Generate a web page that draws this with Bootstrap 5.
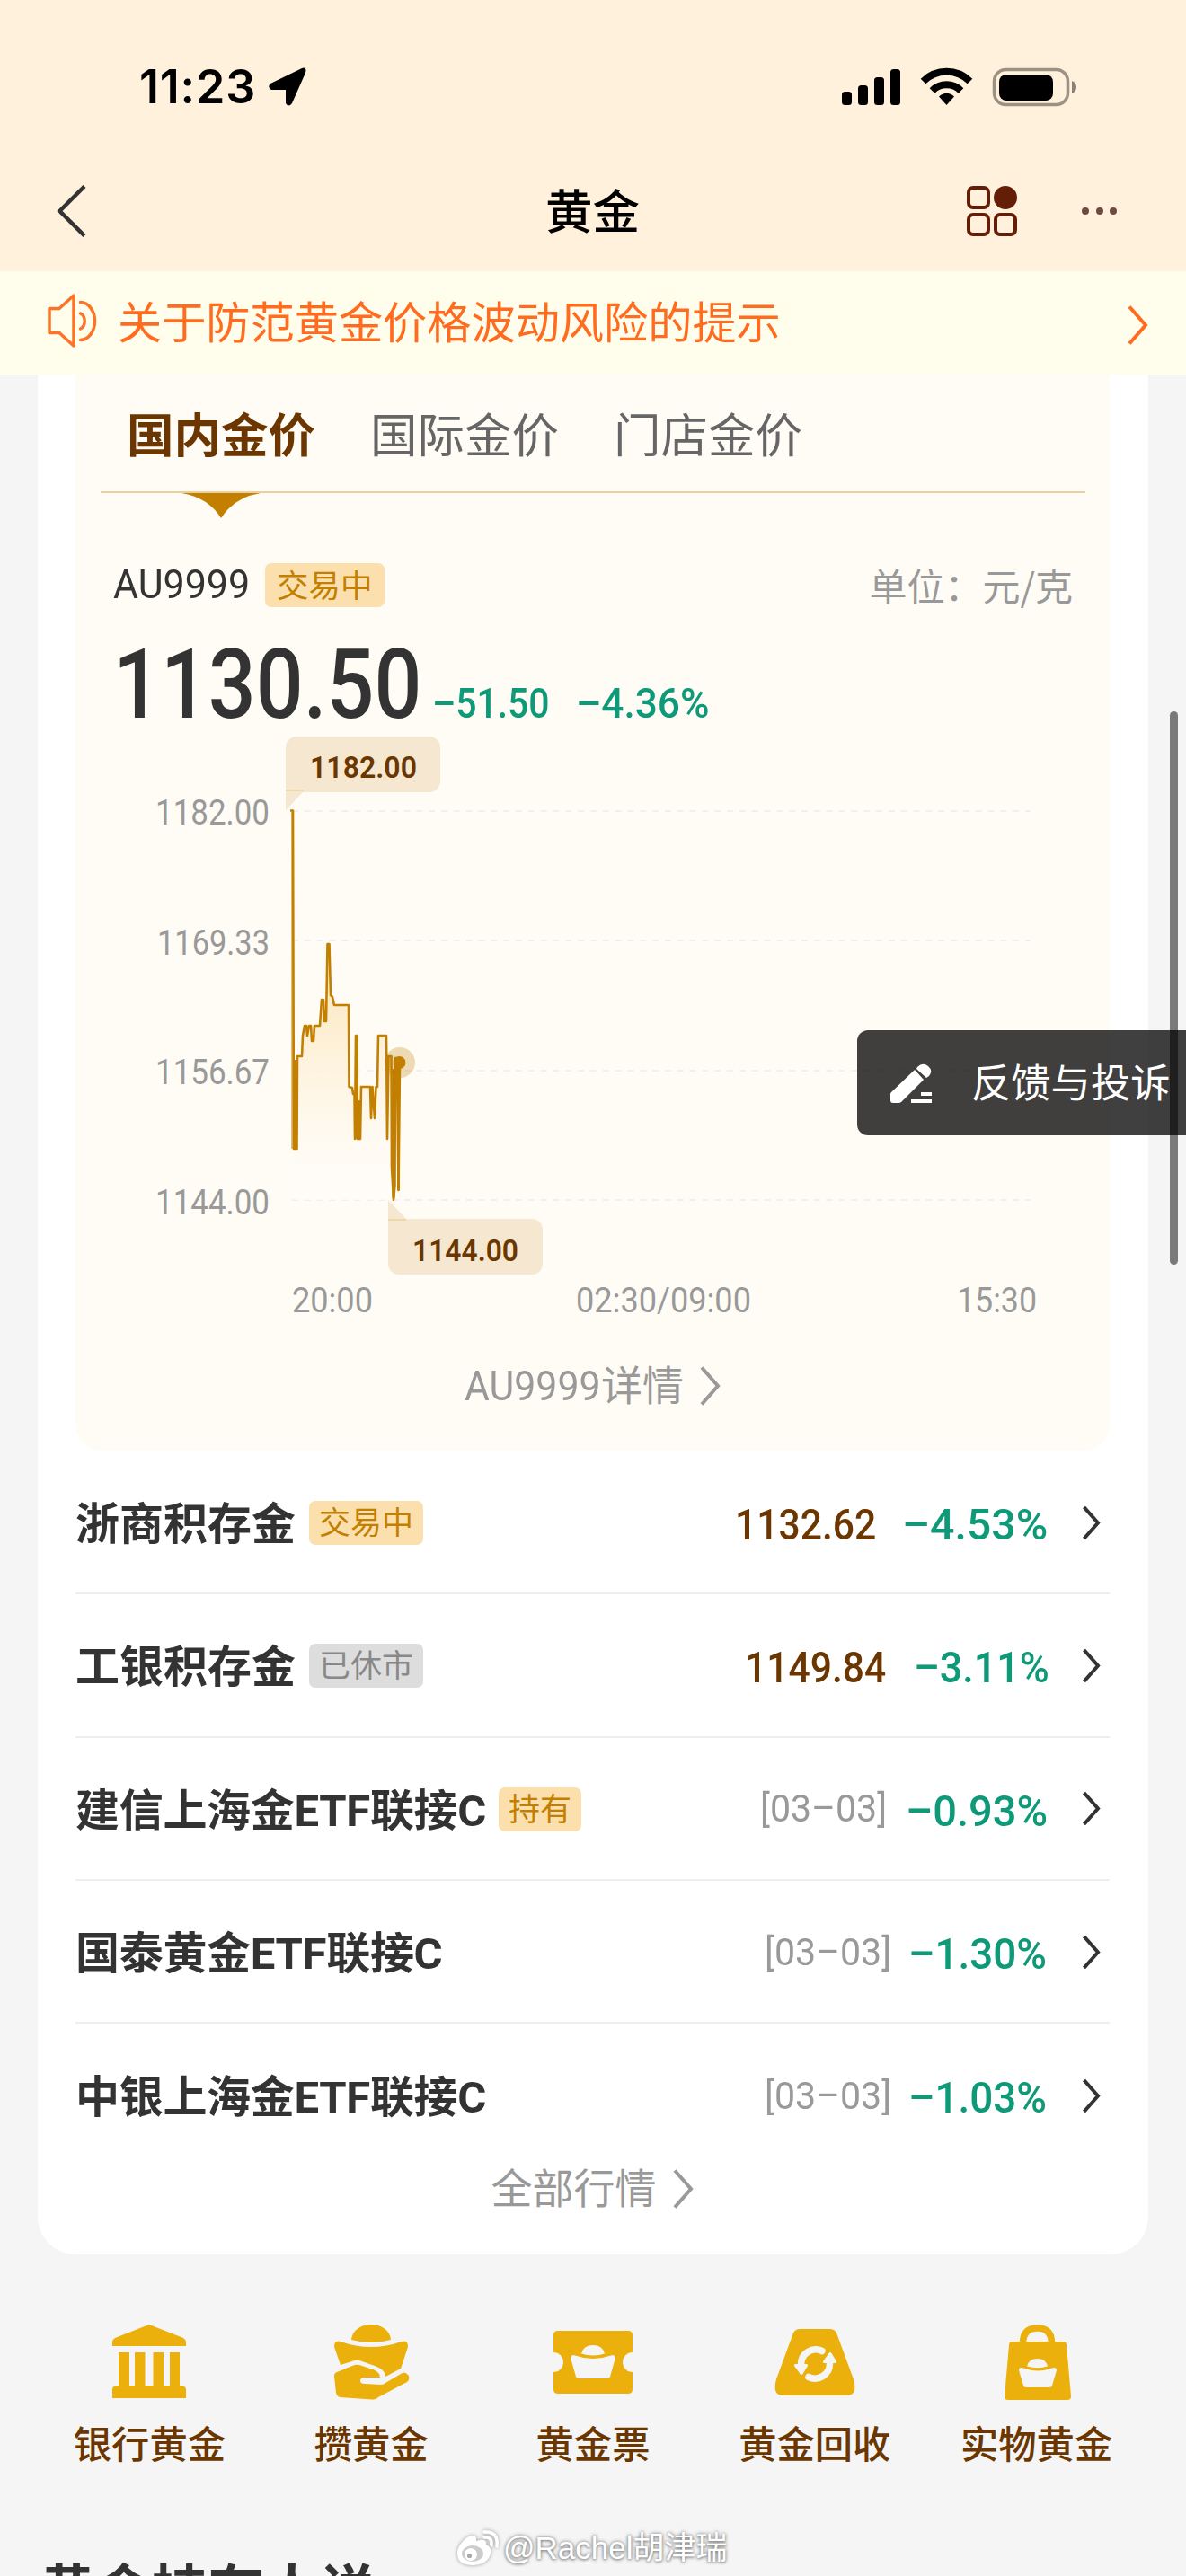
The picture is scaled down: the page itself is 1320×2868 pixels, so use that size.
<!DOCTYPE html>
<html lang="zh-CN">
<head>
<meta charset="utf-8">
<title>黄金</title>
<link href="https://cdn.jsdelivr.net/npm/bootstrap@5.3.0/dist/css/bootstrap.min.css" rel="stylesheet">
<style>
body{background:#f5f5f5;width:1320px;height:2868px;overflow:hidden;font-family:Roboto,"Noto Sans CJK SC",sans-serif;color:#333;position:relative}
svg{display:block;flex:none}
.cjk{font-family:"Noto Sans CJK SC",sans-serif}
.din{display:inline-block;transform-origin:0 50%;transform:scaleX(.87);white-space:nowrap;flex:none}
.topbar{background:#fff1dc;height:302px}
.status{height:170px;padding:23px 119px 0 155px}
.clock{font:600 52px/60px Inter,sans-serif;letter-spacing:.8px;color:#000;width:144px;white-space:nowrap}
.titlebar{height:130px;padding:0 77px 0 60px}
.titlebar h1{font-size:52.500px;font-weight:500;line-height:60px;color:#000;width:106px;margin-left:509px;padding-top:3px}
.notice{height:115px;background:#fffdeb;color:#ff6b1f;padding:0 41px 0 50px}
.notice p{font-size:49.200px;line-height:60px;white-space:nowrap;font-weight:400;margin:0 0 0 21px}
.panel{margin:0 42px;background:#fff;height:2093px;border-radius:0 0 42px 42px;padding:0 43px 0 42px}
.quote{background:#fffcf5;height:1198px;border-radius:0 0 30px 30px;padding:0 27px 0 28px}
.tabs{height:132px;border-bottom:2px solid #ebcf9c;gap:61px;padding:39px 30px 0 29px;font-size:52.500px;line-height:60px;color:#666}
.tabs .on{color:#6b3600;font-weight:700}
.tabmark{margin-left:90px}
.symrow{height:50px;margin-top:49px;padding:0 14px}
.sym{font-size:45px;line-height:50px;width:161px;transform:scaleX(.955)}
.tag{background:#fbe0ae;color:#c27f00;border-radius:7px;height:49px;line-height:52px;font-size:35px;padding:0 11px;white-space:nowrap;flex:none}
.symrow .tag{padding:0 13px;font-size:35.500px}
.tag.off{background:#ddd;color:#888}
.unit{font-size:42px;line-height:50px;color:#999;white-space:nowrap}
.price{height:125px;padding:24px 0 0 14px}
.big{font-size:107px;line-height:126px;font-weight:500;width:355px;transform:scaleX(.87)}
.chg{font-size:47px;line-height:56px;font-weight:500;color:#0e9a78}
.plot{margin:-1px 0 0 -28px}
.more{font-size:46px;line-height:60px;color:#999}
.fund{height:159.3px;border-bottom:2px solid #eee;padding:2px 10px 0 0}
.fund:first-of-type{margin-top:1px}
.fund:last-of-type{border:0}
.fname{font-size:49px;font-weight:700;line-height:60px;white-space:nowrap;margin:5px 15px 0 0}
.fname.etf{letter-spacing:-.3px;margin-right:14px}
.val,.pct{font-size:49px;line-height:60px;font-weight:500;color:#6b3600;margin-top:5px}
.pct{color:#0e9a78}
.day{font-size:43px;line-height:60px;color:#999;margin-top:-2px;transform:scaleX(.955)}
.services{margin:70px 43px 0;height:181px}
.services .col{font-size:42.300px;font-weight:500;line-height:56px;color:#6b3600;padding:0}
.nexttitle{font-size:62.500px;font-weight:700;line-height:80px;margin:85px 0 0 44px;white-space:nowrap}
.feedback{position:absolute;left:954px;top:1147px;width:366px;height:117px;border-radius:12px 0 0 12px;background:rgba(0,0,0,.75);color:#fff;font-size:44.300px;padding-left:36px;white-space:nowrap}
.thumb{position:absolute;left:1302px;top:792px;width:9px;height:616px;border-radius:5px;background:#7a7a7a}
.mark-user{position:absolute;left:506px;top:2814px;color:#fff;font:400 35px/46px "Liberation Sans","Noto Sans CJK SC",sans-serif;text-shadow:0 0 4px #777,0 1px 3px #999;white-space:nowrap}
</style>
</head>
<body>
<header class="topbar">
  <div class="status d-flex align-items-center">
    <span class="clock">11:23</span>
    <svg width="42" height="43" viewBox="0 0 42 43"><path d="M37 1Q43-1 41 6L26 40q-4 5-7 0V25H3q-5-3-1-7z"/></svg>
    <svg class="ms-auto" width="266" height="44" viewBox="0 0 266 44">
      <rect x="2" y="27" width="11" height="15" rx="3.5"/><rect x="20" y="20" width="11" height="22" rx="3.5"/><rect x="38" y="11" width="11" height="31" rx="3.5"/><rect x="56" y="2" width="11" height="40" rx="3.5"/>
      <g fill="none" stroke="#000" stroke-width="8"><path d="M92.500 15.500a37 37 0 0 1 52 0"/><path d="M102.500 26a22.500 22.500 0 0 1 32 0"/></g>
      <path d="M118.500 42l-8.500-9.500q8.500-7.500 17 0z"/>
      <rect x="171.500" y="2.500" width="82" height="39" rx="13" fill="none" stroke="#9c9284" stroke-width="3.500"/>
      <rect x="177" y="8" width="60" height="29" rx="8"/><path d="M258 15q5 2 5 7t-5 7z" fill="#8a8275"/>
    </svg>
  </div>
  <div class="titlebar d-flex align-items-center">
    <svg width="38" height="58" viewBox="0 0 38 58"><path d="M34 1.500L6.500 29 34 56.500" fill="none" stroke="#333" stroke-width="4.500"/></svg>
    <h1 class="mb-0">黄金</h1>
    <svg class="ms-auto" width="170" height="58" viewBox="0 0 170 58">
      <g fill="none" stroke="#641e07" stroke-width="4"><rect x="5" y="3" width="22" height="22" rx="5"/><rect x="5" y="33" width="22" height="22" rx="5"/><rect x="35" y="33" width="22" height="22" rx="5"/></g>
      <circle cx="46" cy="14" r="13" fill="#641e07"/><g fill="#6f4a40"><circle cx="135" cy="29" r="4"/><circle cx="151" cy="29" r="4"/><circle cx="166" cy="29" r="4"/></g>
    </svg>
  </div>
</header>
<div class="notice d-flex align-items-center">
  <svg style="margin-top:-6px" width="60" height="62" viewBox="0 0 60 62" fill="none" stroke="#fb7427" stroke-width="3.500" stroke-linejoin="round" stroke-linecap="round"><path d="M5 17.500h11L32 3v56L16 44.500H5zM39.500 10.500a16 21 0 0 1 0 42M39.500 23a7 9 0 0 1 0 17"/></svg>
  <p>关于防范黄金价格波动风险的提示</p>
  <svg class="ms-auto" style="margin-top:4px" width="24" height="44" viewBox="0 0 24 44"><path d="M2 1.500l18 20.500L2 42.500" fill="none" stroke="#ff6b1f" stroke-width="4"/></svg>
</div>
<main class="panel">
  <section class="quote">
    <nav class="tabs d-flex"><span class="on">国内金价</span><span>国际金价</span><span>门店金价</span></nav>
    <svg class="tabmark" width="88" height="28" viewBox="0 0 88 28"><path d="M0 0h88Q58 5 44 28 30 5 0 0z" fill="#c27f00"/></svg>
    <div class="symrow d-flex align-items-center"><span class="din sym">AU9999</span><span class="tag ms-2">交易中</span><span class="unit cjk ms-auto">单位：元/克</span></div>
    <div class="price d-flex align-items-baseline"><span class="din big">1130.50</span><span class="din chg" style="width:160px">–51.50</span><span class="din chg" style="transform:scaleX(.94)">–4.36%</span></div>
    <svg class="plot" width="1151" height="700" viewBox="84 800 1151 700" font-family="Roboto" font-size="38" fill="#999">
      <defs><linearGradient id="fade" x1="0" y1="1050" x2="0" y2="1310" gradientUnits="userSpaceOnUse"><stop offset="0" stop-color="#fbe3b4"/><stop offset="1" stop-color="#fffdfa" stop-opacity=".6"/></linearGradient></defs>
      <g stroke="#f0f0f0" stroke-width="2" stroke-dasharray="7 6.830"><path d="M325 903h822M325 1047h822M325 1192h822M325 1336h822"/></g>
      <path fill="url(#fade)" d="M327 1279L331 1176H336L339 1142H356L358 1113 363 1137 365 1051 368 1108 372 1119H388L389 1210 393 1218 395 1268H401L402 1210H419L421 1153H430L432 1176H435L438 1336H327z"/>
      <path fill="none" stroke="#c27f00" stroke-width="2.600" stroke-linejoin="round" d="M323 902.500L326 902.500 327 1279 330.500 1279 331 1176 336 1176 337 1153 339 1142 341 1142 342 1153 344 1142 346 1142 347 1159 349 1159 350 1142 356 1142 358 1113 360 1113 361 1137 363 1137 364.500 1051 366.500 1051 368 1108 370 1110 372 1119 388 1119 388.500 1210 392 1211 393 1218 394.500 1218 395 1268 396 1153 397.500 1153 398 1268 401 1268 402 1210 412 1210 413 1245 414.500 1210 417 1245 418.500 1210 420 1210 421 1153 430 1153 431 1268 432.500 1176 435.500 1176 436 1300 438 1336 439.500 1320 440 1178 442 1178 443.500 1325 445 1183"/>
      <path fill="none" stroke="#c27f00" stroke-width="3" d="M329 1279V1180M396.500 1268V1220M399.500 1268V1225M438 1334V1190M443.500 1325V1185"/>
      <path stroke="#c27f00" opacity=".5" stroke-width="3" d="M325.500 904V1279"/>
      <circle cx="445" cy="1183" r="17" fill="#c27f00" opacity=".27"/><circle cx="444.500" cy="1183" r="7" fill="#c27f00"/>
      <g fill="#f5e7d0"><rect x="318" y="820" width="172" height="62" rx="12"/><path d="M318 870v32l21-22z"/><rect x="432" y="1357" width="172" height="62" rx="12"/><path d="M432 1370v-34l21 22z"/></g>
      <path d="M318 880h20M432 1358h20" stroke="#efd8a8" stroke-width="2"/>
      <g fill="#6b3600" font-size="34" font-weight="600"><text x="345" y="866" textLength="119" lengthAdjust="spacingAndGlyphs">1182.00</text><text x="459" y="1404" textLength="118" lengthAdjust="spacingAndGlyphs">1144.00</text></g>
      <g><text x="173" y="918" textLength="127" lengthAdjust="spacingAndGlyphs">1182.00</text><text x="175" y="1063" textLength="125" lengthAdjust="spacingAndGlyphs">1169.33</text><text x="173" y="1207" textLength="127" lengthAdjust="spacingAndGlyphs">1156.67</text><text x="173" y="1352" textLength="127" lengthAdjust="spacingAndGlyphs">1144.00</text>
      <text x="325" y="1461" textLength="90" lengthAdjust="spacingAndGlyphs">20:00</text><text x="641" y="1461" textLength="195" lengthAdjust="spacingAndGlyphs">02:30/09:00</text><text x="1065" y="1461" textLength="89" lengthAdjust="spacingAndGlyphs">15:30</text></g>
    </svg>
    <div class="more d-flex justify-content-center align-items-center" style="margin-top:13px"><span><span class="din" style="transform:scaleX(.93);margin-right:-11px">AU9999</span>详情</span><svg class="ms-3" width="26" height="44" viewBox="0 0 26 44"><path d="M4 1.500l18 20.500L4 42.500" fill="none" stroke="#999" stroke-width="4"/></svg></div>
  </section>
  <section>
    <div class="fund d-flex align-items-center"><span class="fname">浙商积存金</span><span class="tag">交易中</span>
      <span class="din val ms-auto" style="width:186px">1132.62</span><span class="din pct" style="width:201px;transform:scaleX(.985)">–4.53%</span><svg width="20" height="38" viewBox="0 0 20 38"><path d="M1.500 1L17 18.500 1.500 36" fill="none" stroke="#333" stroke-width="4"/></svg></div>
    <div class="fund d-flex align-items-center"><span class="fname">工银积存金</span><span class="tag off">已休市</span>
      <span class="din val ms-auto" style="width:188px">1149.84</span><span class="din pct" style="width:188px;transform:scaleX(.915)">–3.11%</span><svg width="20" height="38" viewBox="0 0 20 38"><path d="M1.500 1L17 18.500 1.500 36" fill="none" stroke="#333" stroke-width="4"/></svg></div>
    <div class="fund d-flex align-items-center"><span class="fname etf">建信上海金ETF联接C</span><span class="tag">持有</span>
      <span class="din day ms-auto" style="width:162px">[03–03]</span><span class="din pct" style="width:197px;transform:scaleX(.96)">–0.93%</span><svg width="20" height="38" viewBox="0 0 20 38"><path d="M1.500 1L17 18.500 1.500 36" fill="none" stroke="#333" stroke-width="4"/></svg></div>
    <div class="fund d-flex align-items-center"><span class="fname etf">国泰黄金ETF联接C</span>
      <span class="din day ms-auto" style="width:160px">[03–03]</span><span class="din pct" style="width:194px;transform:scaleX(.935)">–1.30%</span><svg width="20" height="38" viewBox="0 0 20 38"><path d="M1.500 1L17 18.500 1.500 36" fill="none" stroke="#333" stroke-width="4"/></svg></div>
    <div class="fund d-flex align-items-center"><span class="fname etf">中银上海金ETF联接C</span>
      <span class="din day ms-auto" style="width:160px">[03–03]</span><span class="din pct" style="width:194px;transform:scaleX(.935)">–1.03%</span><svg width="20" height="38" viewBox="0 0 20 38"><path d="M1.500 1L17 18.500 1.500 36" fill="none" stroke="#333" stroke-width="4"/></svg></div>
  </section>
  <div class="more d-flex justify-content-center align-items-center" style="margin-top:-5px"><span>全部行情</span><svg class="ms-3" width="26" height="44" viewBox="0 0 26 44"><path d="M4 1.500l18 20.500L4 42.500" fill="none" stroke="#999" stroke-width="4"/></svg></div>
</main>
<nav class="services row g-0 text-center">
  <div class="col"><svg class="mx-auto" width="110" height="115" viewBox="0 0 110 115" fill="#ebb00b"><path d="M14 32v-5q0-2 3-4L55 8l38 15q3 2 3 4v5zM21 39h12v38H21zM39 39h11.500v38H39zM59.500 39H71v38H59.500zM78 39h11v38H78zM14 90V80q1-4 5-4h72q4 0 5 4v10z"/></svg>银行黄金</div>
  <div class="col"><svg class="mx-auto" width="110" height="115" viewBox="0 0 110 115" fill="#ebb00b"><path d="M33 25C34 14 44 8 55 8s21 6 22 17Q55 31 33 25zM14 33q0-8 7-6 34 12 68 0 7-2 7 6l-8 24-17 9q0-8-12-12l-17-6q-4-1-8 1l-13 4z"/><path d="M14 65q0-3 3-4l17-7q4-2 8-1l15 5q8 3 8 9H48q-5 0-5 3.500t5 3.500l18 1q3 0 5-2l17-10q4-3 7 0 5 4 0 9L63 89q-3 3-7 2.500L20 89q-3-1-4-5z"/></svg>攒黄金</div>
  <div class="col"><svg class="mx-auto" width="110" height="115" viewBox="0 0 110 115"><path d="M16 15h78q5 0 5 5v19a11 11 0 0 0 0 22v19q0 5-5 5H16q-5 0-5-5V61a11 11 0 0 0 0-22V20q0-5 5-5z" fill="#ebb00b"/><path d="M42 40.500q2-9.500 13-9.500t13 9.500q-13 4-26 0zM30 45q1-4 5-2.500 20 7 40 0 4-1.500 5 2.500l-6 21q-.5 2-3 2H39q-2.500 0-3-2z" fill="#f5f5f5"/></svg>黄金票</div>
  <div class="col"><svg class="mx-auto" width="110" height="115" viewBox="0 0 110 115"><path d="M38 13h34q6 0 8 7l18 49q5 18-8 18H20Q7 87 12 69l18-49q2-7 8-7z" fill="#ebb00b"/><g fill="none" stroke="#f5f5f5" stroke-width="7.500" stroke-linecap="round"><path d="M63 37.500a16.500 16.500 0 0 0-23.500 15M48 66.500a16.500 16.500 0 0 0 23.500-15"/></g><path d="M33 52h13q2 1 1 2l-5.500 9q-1.500 2-3 0L32 54q-1-1 1-2zM78 51H65q-2-1-1-2l6.500-9q1.500-2 3 0l5.500 9q1 1-1 2z" fill="#f5f5f5"/></svg>黄金回收</div>
  <div class="col"><svg class="mx-auto" width="110" height="115" viewBox="0 0 110 115"><path d="M28 27h56q4 0 4 4l5 57q0 4-4 4H23q-4 0-4-4l5-57q0-4 4-4z" fill="#ebb00b"/><path d="M39.500 29q0-17 16-17t16 17" fill="none" stroke="#ebb00b" stroke-width="7.500"/><path d="M44 54.500q2-8.500 11.500-8.500T67 54.500q-11.500 3.500-23 0zM35 59q0-4 5-2.500 16 6 32 0 5-1.500 5 2.500l-5 17q-.5 2-3 2H43q-2.500 0-3-2z" fill="#f5f5f5"/></svg>实物黄金</div>
</nav>
<h2 class="nexttitle">黄金持有人说</h2>
<div class="thumb"></div>
<div class="feedback d-flex align-items-center">
  <svg width="48" height="48" viewBox="0 0 48 48" fill="#fff"><path d="M28 9l10 11-25 25q-1 1-3 1H4q-3 0-3-3v-7q0-1 1-2zM31 6q6-6 12-1t1 11l-3 2L30 8zM35 34h12v4H35zM24 42h23v4H24z"/></svg>
  <span style="margin:3px 0 0 43px">反馈与投诉</span>
</div>
<div class="mark-user d-flex align-items-center">
  <svg width="54" height="46" viewBox="0 0 54 46" style="filter:drop-shadow(0 0 2px #999)"><path d="M3 29C3 20 13 9 20 9q5 0 4 6 12-4 11 4 7 3 5 10-3 12-19 13Q3 42 3 29z" fill="#fff"/><ellipse cx="20" cy="29" rx="12" ry="9" fill="#ccc"/><circle cx="18" cy="30" r="7" fill="#fff"/><circle cx="16.500" cy="31.500" r="2.600" fill="#aaa"/><path d="M33 5q16-1 14 16M33 11q9-1 8 9" fill="none" stroke="#fff" stroke-width="3.500" stroke-linecap="round"/></svg>
  <span>@Rachel胡津瑞</span>
</div>
<script src="https://cdn.jsdelivr.net/npm/bootstrap@5.3.0/dist/js/bootstrap.bundle.min.js"></script>
</body>
</html>
